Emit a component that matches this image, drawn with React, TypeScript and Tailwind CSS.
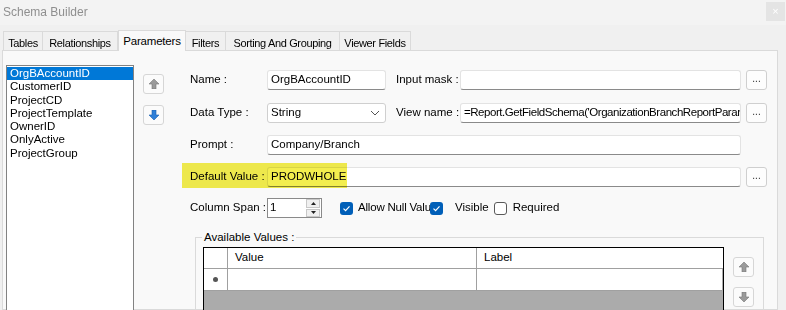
import React from 'react';

const font = { fontFamily: '"Liberation Sans", Arial, sans-serif' };

function ArrowIcon({ dir, color }: { dir: 'up' | 'down'; color: 'gray' | 'blue' }) {
  const fill = color === 'blue' ? '#2f7fd8' : '#9a9a9a';
  const dark = color === 'blue' ? '#1a5fb0' : '#777';
  const pts = dir === 'up' ? '5,0 10,5 7,5 7,10 3,10 3,5 0,5' : '3,0 7,0 7,5 10,5 5,10 0,5 3,5';
  return (
    <svg width="10" height="10" viewBox="0 0 10 10">
      <polygon points={pts} fill={fill} stroke={dark} strokeWidth="0.6" />
    </svg>
  );
}

function SmallBtn({ children }: { children: React.ReactNode }) {
  return (
    <div className="w-[21px] h-[20px] rounded-[3px] border border-[#d6d6d6] bg-[#fbfbfb] flex items-center justify-center">
      {children}
    </div>
  );
}

function DotsBtn() {
  return (
    <div className="w-[21px] h-[20px] rounded-[3px] border border-[#cfcfcf] bg-[#fdfdfd] flex items-center justify-center text-[10px] text-[#333] leading-none pb-[2px]">
      ...
    </div>
  );
}

function TextBox({ value, w, className = '' }: { value?: string; w: string; className?: string }) {
  return (
    <div
      className={`${w} h-[20px] bg-white border border-[#e3e3e3] border-b-[#8a8a8a] rounded-[3px] flex items-center px-[3px] text-[11.5px] text-black whitespace-nowrap overflow-hidden ${className}`}
    >
      {value}
    </div>
  );
}

function Check({ checked }: { checked: boolean }) {
  return checked ? (
    <div className="w-[13px] h-[13px] shrink-0 rounded-[3px] bg-[#005fb8] flex items-center justify-center">
      <svg width="9" height="9" viewBox="0 0 9 9">
        <path d="M1.5 4.6 L3.6 6.6 L7.5 2.4" fill="none" stroke="white" strokeWidth="1.2" />
      </svg>
    </div>
  ) : (
    <div className="w-[13px] h-[13px] shrink-0 rounded-[3px] border border-[#5a5a5a] bg-white" />
  );
}

const params = ['OrgBAccountID', 'CustomerID', 'ProjectCD', 'ProjectTemplate', 'OwnerID', 'OnlyActive', 'ProjectGroup'];
const tabs: [string, string][] = [
  ['Tables', 'w-[40px]'],
  ['Relationships', 'w-[75px]'],
  ['Parameters', 'w-[68px]'],
  ['Filters', 'w-[40px]'],
  ['Sorting And Grouping', 'w-[114px]'],
  ['Viewer Fields', 'w-[71px]'],
];

export default function App() {
  return (
    <div className="w-[786px] h-[310px] bg-[#f0f0f0] overflow-hidden text-[11.5px] text-black" style={font}>
      {/* Title bar */}
      <div className="h-[25px] flex items-start justify-between pl-[3px] pr-[1px] bg-[#f3f3f3]">
        <span className="text-[#8f8f8f] text-[12px] mt-[3px]">Schema Builder</span>
        <div className="w-[19px] h-[19px] mt-[2px] bg-[#e4e4e4] text-white text-[11px] flex items-center justify-center">×</div>
      </div>

      {/* Tabs */}
      <div className="flex items-end pl-[3px] h-[25px]">
        {tabs.map(([t, w]) =>
          t === 'Parameters' ? (
            <div key={t} className={`${w} h-[21px] bg-[#f9f9f9] border border-[#dadada] border-b-0 relative z-10 -mb-[1px] pt-[2px] text-center tracking-[-0.2px] text-[11.5px]`}>
              {t}
            </div>
          ) : (
            <div key={t} className={`${w} h-[19px] bg-[#f0f0f0] border border-[#dadada] border-l-0 first:border-l border-b-0 pt-[3px] text-center tracking-[-0.35px] text-[11px] whitespace-nowrap`}>
              {t}
            </div>
          )
        )}
      </div>

      {/* Panel */}
      <div className="ml-[2px] w-[776px] h-[260px] bg-[#f9f9f9] border border-[#dadada] flex">
        {/* Parameter list */}
        <div className="ml-[3px] mt-[14px] w-[128px] h-[260px] bg-white border border-[#828282] pt-[1px]">
          {params.map((p, i) => (
            <div
              key={p}
              className={`h-[13.3px] leading-[13px] pl-[3px] ${i === 0 ? 'bg-[#0078d7] text-white' : 'text-black'}`}
            >
              {p}
            </div>
          ))}
        </div>

        {/* Up/down buttons */}
        <div className="ml-[9px] mt-[23px] flex flex-col gap-[11px]">
          <SmallBtn><ArrowIcon dir="up" color="gray" /></SmallBtn>
          <SmallBtn><ArrowIcon dir="down" color="blue" /></SmallBtn>
        </div>

        {/* Form */}
        <div className="ml-[26px] mt-[19px] flex flex-col w-[578px]">
          <div className="flex items-center h-[20px]">
            <span className="w-[77px]">Name :</span>
            <TextBox value="OrgBAccountID" w="w-[119px]" />
            <span className="ml-[10px] w-[64px]">Input mask :</span>
            <TextBox w="w-[281px]" />
            <div className="ml-[5px]"><DotsBtn /></div>
          </div>

          <div className="flex items-center h-[20px] mt-[13px]">
            <span className="w-[77px]">Data Type :</span>
            <div className="w-[119px] h-[20px] bg-white border border-[#cfcfcf] rounded-[3px] flex items-center justify-between px-[3px]">
              <span>String</span>
              <svg width="10" height="6" viewBox="0 0 10 6" className="mr-[2px]">
                <path d="M1 1 L5 5 L9 1" fill="none" stroke="#555" strokeWidth="1" />
              </svg>
            </div>
            <span className="ml-[10px] w-[64px]">View name :</span>
            <TextBox value="=Report.GetFieldSchema('OrganizationBranchReportParam" w="w-[281px]" className="tracking-[-0.45px]" />
            <div className="ml-[5px]"><DotsBtn /></div>
          </div>

          <div className="flex items-center h-[20px] mt-[12px]">
            <span className="w-[77px]">Prompt :</span>
            <TextBox value="Company/Branch" w="w-[474px]" />
          </div>

          <div className="flex items-center h-[20px] mt-[12px] relative">
            <span className="w-[77px]">Default Value :</span>
            <TextBox value="PRODWHOLE" w="w-[474px]" />
            <div className="ml-[5px]"><DotsBtn /></div>
            <div className="absolute left-[-8px] top-[-4px] w-[165px] h-[25px] bg-[#f3ee4e] mix-blend-multiply" />
          </div>

          <div className="flex items-center h-[20px] mt-[11px]">
            <span className="w-[77px] whitespace-nowrap">Column Span :</span>
            <div className="w-[55px] h-[20px] bg-white border border-[#8a8a8a] flex items-center justify-between pl-[2px]">
              <span>1</span>
              <div className="w-[14px] h-[18px] flex flex-col gap-[1px] mr-[1px]">
                <div className="flex-1 bg-[#f0f0f0] border border-[#c8c8c8] flex items-center justify-center">
                  <svg width="5" height="3" viewBox="0 0 5 3"><polygon points="2.5,0 5,3 0,3" fill="#222" /></svg>
                </div>
                <div className="flex-1 bg-[#f0f0f0] border border-[#c8c8c8] flex items-center justify-center">
                  <svg width="5" height="3" viewBox="0 0 5 3"><polygon points="0,0 5,0 2.5,3" fill="#222" /></svg>
                </div>
              </div>
            </div>
            <div className="ml-[18px] flex items-center">
              <Check checked />
              <span className="ml-[5px] w-[72px] overflow-hidden whitespace-nowrap tracking-[-0.2px]">Allow Null Valu</span>
            </div>
            <div className="flex items-center">
              <Check checked />
              <span className="ml-[12px]">Visible</span>
            </div>
            <div className="ml-[5px] flex items-center">
              <Check checked={false} />
              <span className="ml-[6px]">Required</span>
            </div>
          </div>

          {/* Available values group */}
          <div className="mt-[19px] ml-[5px] w-[569px] h-[80px] border border-[#dadada] relative flex">
            <span className="absolute left-[6px] top-[-8px] bg-[#f9f9f9] px-[2px] text-[11.5px] leading-[14px]">Available Values :</span>
            <div className="ml-[7px] mt-[9px] w-[521px] h-[70px] border border-black bg-[#ababab] flex flex-col">
              <div className="h-[21px] bg-white flex border-b border-[#a0a0a0]">
                <div className="w-[24px] border-r border-[#a0a0a0]" />
                <div className="w-[249px] border-r border-[#a0a0a0] pl-[7px] flex items-center">Value</div>
                <div className="flex-1 pl-[7px] flex items-center">Label</div>
              </div>
              <div className="h-[22px] bg-white flex border-b border-[#a0a0a0] mr-[1px]">
                <div className="w-[24px] border-r border-[#a0a0a0] flex items-center justify-center">
                  <div className="w-[5px] h-[5px] rounded-full bg-[#555]" />
                </div>
                <div className="w-[249px] border-r border-[#a0a0a0]" />
                <div className="flex-1" />
              </div>
            </div>
            <div className="ml-[9px] mt-[19px] flex flex-col gap-[10px]">
              <SmallBtn><ArrowIcon dir="up" color="gray" /></SmallBtn>
              <SmallBtn><ArrowIcon dir="down" color="gray" /></SmallBtn>
            </div>
          </div>
        </div>
      </div>
    </div>
  );
}
